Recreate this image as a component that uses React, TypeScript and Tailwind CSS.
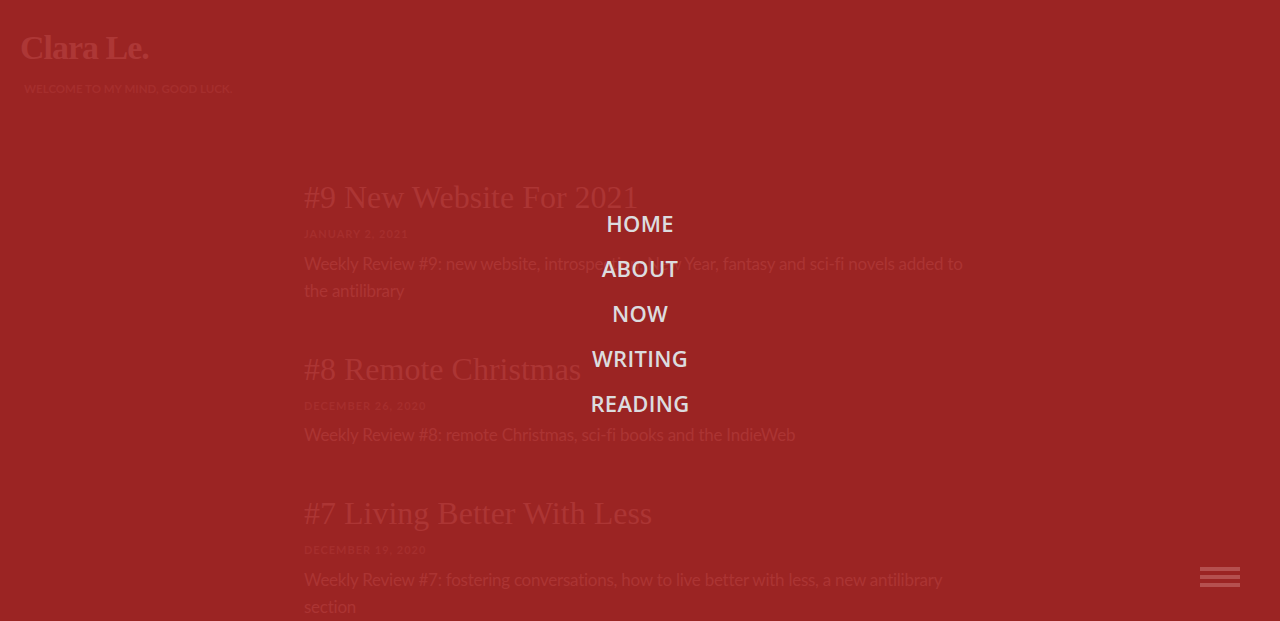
import React from 'react'

const posts = [
  {
    title: '#9 New Website For 2021',
    date: 'January 2, 2021',
    excerpt: 'Weekly Review #9: new website, introspection, New Year, fantasy and sci-fi novels added to the antilibrary',
  },
  {
    title: '#8 Remote Christmas',
    date: 'December 26, 2020',
    excerpt: 'Weekly Review #8: remote Christmas, sci-fi books and the IndieWeb',
  },
  {
    title: '#7 Living Better With Less',
    date: 'December 19, 2020',
    excerpt: 'Weekly Review #7: fostering conversations, how to live better with less, a new antilibrary section',
  },
]

const links = ['Home', 'About', 'Now', 'Writing', 'Reading']

export default function App() {
  return (
    <div className="relative h-[621px] overflow-hidden bg-[#9b2423] text-[#ab3433] font-['Lato','Open_Sans',sans-serif]">
      {/* Header */}
      <header className="px-5 pt-[26px]">
        <h1 className="font-['Liberation_Serif',serif] text-[34px] font-bold leading-[44px] tracking-[-1px] text-[#ad3736]">
          Clara Le.
        </h1>
        <p className="mt-[10px] pl-1 text-[11.5px] font-bold uppercase text-[#a52e2d]">
          Welcome to my mind, good luck.
        </p>
      </header>

      {/* Posts */}
      <main className="mx-auto mt-[82px] max-w-2xl">
        {posts.map((p) => (
          <article key={p.title} className="mb-[47px]">
            <h2 className="font-['Liberation_Serif',serif] text-[32px] leading-[36px] text-[#ac3534]">{p.title}</h2>
            <div className="mt-[11px] text-[11px] font-bold uppercase tracking-[1px] text-[#a52e2d]">{p.date}</div>
            <p className="mt-[7px] text-[17px] leading-[27px] tracking-[-0.25px]">{p.excerpt}</p>
          </article>
        ))}
      </main>

      {/* Menu overlay */}
      <nav className="absolute inset-x-0 top-[201px] flex flex-col items-center">
        {links.map((l) => (
          <a
            key={l}
            href="#"
            className="font-['Open_Sans',sans-serif] text-[22px] font-semibold uppercase leading-[45px] tracking-[0.3px] text-[#dcdcdf]"
          >
            {l}
          </a>
        ))}
      </nav>

      <button className="absolute bottom-[34px] right-10 flex w-10 flex-col gap-1">
        <span className="h-1 w-10 bg-[#b5504f]" />
        <span className="h-1 w-10 bg-[#b5504f]" />
        <span className="h-1 w-10 bg-[#b5504f]" />
      </button>
    </div>
  )
}
